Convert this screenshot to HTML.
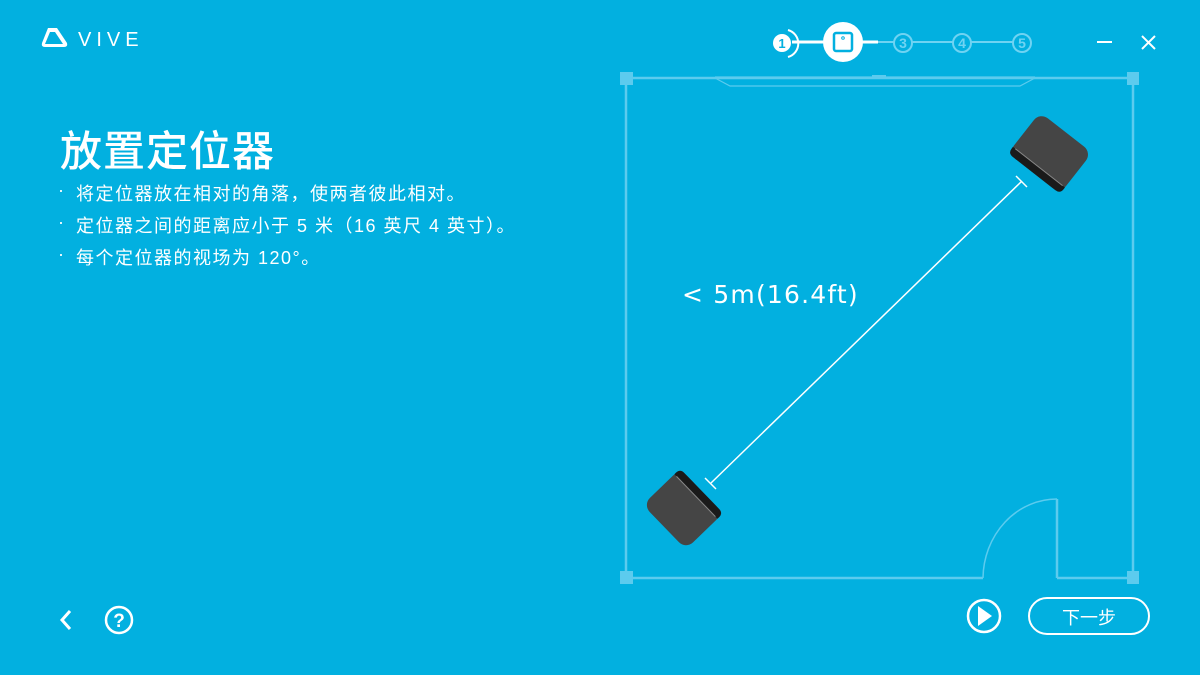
<!DOCTYPE html>
<html><head><meta charset="utf-8"><style>
body{margin:0;width:1200px;height:675px;overflow:hidden;background:#02b0e0;font-family:"Liberation Sans","Noto Sans CJK SC",sans-serif;color:#fff;position:relative}
.t{position:absolute;left:60px;top:118px;font-size:42px;font-weight:500;letter-spacing:1px}
.b{position:absolute;left:76px;font-size:18px;letter-spacing:1.5px}
.d{position:absolute;left:58px;font-size:18px}
</style></head><body>
<svg width="1200" height="675" style="position:absolute;left:0;top:0">
<path d="M48 28 L57 28 L67 43 Q68 47 64 47 L45 47 Q41 47 42 43 Z M50 32 L45 44 L63 44 L55 32 Z" fill="#fff" fill-rule="evenodd"/>
<text x="78" y="46" font-size="20" fill="#fff" letter-spacing="5" font-family="Liberation Sans">VIVE</text>
<line x1="792" y1="42" x2="830" y2="42" stroke="#fff" stroke-width="3"/>
<line x1="860" y1="42" x2="878" y2="42" stroke="#fff" stroke-width="3"/>
<line x1="878" y1="42" x2="894" y2="42" stroke="#6fd3f2" stroke-width="2"/>
<line x1="912" y1="42" x2="953" y2="42" stroke="#6fd3f2" stroke-width="2"/>
<line x1="971" y1="42" x2="1013" y2="42" stroke="#6fd3f2" stroke-width="2"/>
<circle cx="782" cy="43" r="9" fill="#fff"/>
<text x="782" y="48" font-size="13" font-weight="bold" fill="#02b0e0" text-anchor="middle">1</text>
<path d="M788 30 A14 14 0 0 1 788 57" stroke="#fff" stroke-width="2" fill="none"/>
<circle cx="843" cy="42" r="20" fill="#fff"/>
<rect x="834" y="33" width="18" height="18" rx="2" fill="none" stroke="#02b0e0" stroke-width="2.5"/>
<circle cx="843" cy="38" r="1.3" fill="none" stroke="#02b0e0"/>
<g fill="none" stroke="#6fd3f2" stroke-width="2"><circle cx="903" cy="43" r="9"/><circle cx="962" cy="43" r="9"/><circle cx="1022" cy="43" r="9"/></g>
<g fill="#6fd3f2" font-size="14" font-weight="bold" text-anchor="middle"><text x="903" y="48">3</text><text x="962" y="48">4</text><text x="1022" y="48">5</text></g>
<line x1="1097" y1="42" x2="1112" y2="42" stroke="#fff" stroke-width="2"/>
<path d="M1142 36 L1155 49 M1155 36 L1142 49" stroke="#fff" stroke-width="2"/>
<g stroke="#5ccbee" stroke-width="2.5" fill="none">
<path d="M626 78 L1133 78 M626 78 L626 578 L983 578 M1057 578 L1057 499 M1057 578 L1133 578 L1133 78"/>
</g>
<path d="M983 578 A74 80 0 0 1 1057 499" stroke="#5ccbee" stroke-width="1.5" fill="none"/>
<path d="M715 77 L1035 77 M715 78 L730 86 L1020 86 L1035 78" stroke="#5ccbee" stroke-width="1.2" fill="none"/>
<line x1="872" y1="76" x2="886" y2="76" stroke="#5ccbee" stroke-width="2"/>
<g fill="#5ccbee"><rect x="620" y="72" width="13" height="13"/><rect x="1127" y="72" width="12" height="13"/><rect x="620" y="571" width="13" height="13"/><rect x="1127" y="571" width="12" height="13"/></g>
<line x1="1022" y1="181" x2="711" y2="483" stroke="#fff" stroke-width="1.5"/>
<line x1="1016" y1="176" x2="1027" y2="187" stroke="#fff" stroke-width="1.5"/>
<line x1="705" y1="478" x2="716" y2="489" stroke="#fff" stroke-width="1.5"/>
<text x="682" y="303" font-size="25" fill="#fff" font-family="DejaVu Sans" letter-spacing="1.2">&lt; 5m(16.4ft)</text>
<g transform="translate(1050,153) rotate(38)">
<rect x="-33" y="-26" width="66" height="52" rx="10" fill="#454545"/>
<path d="M-33 18 L33 18 L33 20 Q33 26 27 26 L-27 26 Q-33 26 -33 20 Z" fill="#1a1a1a"/>
<line x1="-30" y1="18" x2="30" y2="18" stroke="#888" stroke-width="1"/>
</g>
<g transform="translate(683,509) rotate(46)">
<rect x="-31" y="-26" width="62" height="52" rx="10" fill="#454545"/>
<path d="M-31 -18 L31 -18 L31 -20 Q31 -26 25 -26 L-25 -26 Q-31 -26 -31 -20 Z" fill="#1a1a1a"/>
<line x1="-28" y1="-18" x2="28" y2="-18" stroke="#888" stroke-width="1"/>
</g>
<path d="M70 611 L62 620 L70 629" stroke="#fff" stroke-width="3" fill="none"/>
<circle cx="119" cy="620" r="13" stroke="#fff" stroke-width="2.5" fill="none"/>
<text x="119" y="627" font-size="19" font-weight="bold" fill="#fff" text-anchor="middle">?</text>
<circle cx="984" cy="616" r="16" stroke="#fff" stroke-width="2.5" fill="none"/>
<path d="M978 606 L992 616 L978 626 Z" fill="#fff"/>
<rect x="1029" y="598" width="120" height="36" rx="18" stroke="#fff" stroke-width="2" fill="none"/>
<text x="1089" y="624" font-size="18" fill="#fff" text-anchor="middle" font-family="Noto Sans CJK SC">下一步</text>
</svg>
<div class="t">放置定位器</div>
<div class="d" style="top:180px">·</div><div class="b" style="top:180px">将定位器放在相对的角落，使两者彼此相对。</div>
<div class="d" style="top:212px">·</div><div class="b" style="top:212px">定位器之间的距离应小于 5 米（16 英尺 4 英寸）。</div>
<div class="d" style="top:244px">·</div><div class="b" style="top:244px">每个定位器的视场为 120°。</div>
</body></html>
